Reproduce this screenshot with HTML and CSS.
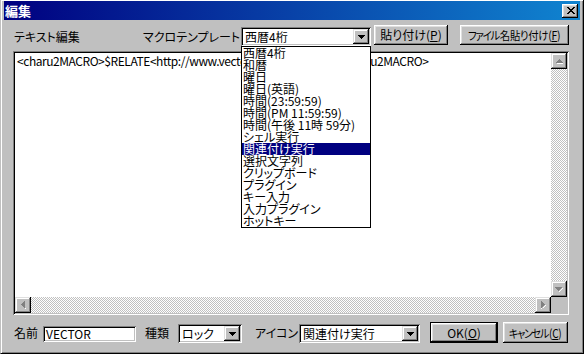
FILE: index.html
```html
<!DOCTYPE html>
<html lang="ja">
<head>
<meta charset="utf-8">
<title>編集</title>
<link rel="stylesheet" href="styles.css">
</head>
<body>
<div class="window">
  <div class="titlebar">
    <span class="title">編集</span>
    <div class="close">
      <svg width="8" height="7" viewBox="0 0 8 7" shape-rendering="crispEdges"><path d="M0 0h2v1h-2zM6 0h2v1h-2zM1 1h2v1h-2zM5 1h2v1h-2zM2 2h4v1h-4zM3 3h2v1h-2zM2 4h4v1h-4zM1 5h2v1h-2zM5 5h2v1h-2zM0 6h2v1h-2zM6 6h2v1h-2z" fill="#000"/></svg>
    </div>
  </div>
  <div class="client">
    <div class="toprow">
      <span class="lbl lbl-text">テキスト編集</span>
      <span class="lbl lbl-macro">マクロテンプレート</span>
      <div class="combo combo-macro">
        <span class="combo-text">西暦4桁</span>
        <span class="dropbtn"><svg width="7" height="4" viewBox="0 0 7 4" shape-rendering="crispEdges"><path d="M0 0h7v1h-7zM1 1h5v1h-5zM2 2h3v1h-3zM3 3h1v1h-1z" fill="#000"/></svg></span>
        <ul class="droplist">
          <li>西暦4桁</li>
          <li>和暦</li>
          <li>曜日</li>
          <li>曜日(英語)</li>
          <li>時間(23:59:59)</li>
          <li>時間(PM 11:59:59)</li>
          <li>時間(午後 11時 59分)</li>
          <li>シェル実行</li>
          <li class="sel">関連付け実行</li>
          <li>選択文字列</li>
          <li>クリップボード</li>
          <li>プラグイン</li>
          <li>キー入力</li>
          <li>入力プラグイン</li>
          <li>ホットキー</li>
        </ul>
      </div>
      <div class="btn btn-paste">貼り付け(<u>P</u>)</div>
      <div class="btn btn-fpaste small"><span class="lab"><span class="kana">ファイル</span>名貼り付け(<u>F</u>)</span></div>
    </div>

    <div class="editor">
      <div class="edit-text">&lt;charu2MACRO&gt;$RELATE&lt;http://www.vector.co.jp/&gt;VECTORS&lt;/charu2MACRO&gt;</div>
      <div class="vscroll">
        <span class="sbtn"><svg width="7" height="5" viewBox="0 0 7 5" shape-rendering="crispEdges"><path d="M4 1h1v1h-1zM5 2h1v1h-1zM1 4h7v1h-7z" fill="#fff"/><path d="M3 0h1v1h-1zM2 1h3v1h-3zM1 2h5v1h-5zM0 3h7v1h-7z" fill="#808080"/></svg></span>
        <span class="track"></span>
        <span class="sbtn"><svg width="8" height="5" viewBox="0 0 8 5" shape-rendering="crispEdges"><path d="M7 1h1v1h-1zM6 2h1v1h-1zM5 3h1v1h-1zM4 4h1v1h-1z" fill="#fff"/><path d="M0 0h7v1h-7zM1 1h5v1h-5zM2 2h3v1h-3zM3 3h1v1h-1z" fill="#808080"/></svg></span>
      </div>
      <div class="hscroll">
        <span class="sbtn"><svg width="5" height="8" viewBox="0 0 5 8" shape-rendering="crispEdges"><path d="M1 4h1v1h-1zM2 5h1v1h-1zM3 6h1v1h-1zM4 7h1v1h-1z" fill="#fff"/><path d="M3 0h1v7h-1zM2 1h1v5h-1zM1 2h1v3h-1zM0 3h1v1h-1z" fill="#808080"/></svg></span>
        <span class="track"></span>
        <span class="sbtn"><svg width="5" height="8" viewBox="0 0 5 8" shape-rendering="crispEdges"><path d="M0 7h1v1h-1zM4 4h1v1h-1zM3 5h1v1h-1zM2 6h1v1h-1z" fill="#fff"/><path d="M0 0h1v7h-1zM1 1h1v5h-1zM2 2h1v3h-1zM3 3h1v1h-1z" fill="#808080"/></svg></span>
      </div>
      <div class="corner"></div>
    </div>

    <div class="botrow">
      <span class="lbl lbl-name">名前</span>
      <div class="field">VECTOR</div>
      <span class="lbl lbl-kind">種類</span>
      <div class="combo combo-kind">
        <span class="combo-text">ロック</span>
        <span class="dropbtn"><svg width="7" height="4" viewBox="0 0 7 4" shape-rendering="crispEdges"><path d="M0 0h7v1h-7zM1 1h5v1h-5zM2 2h3v1h-3zM3 3h1v1h-1z" fill="#000"/></svg></span>
      </div>
      <span class="lbl lbl-icon">アイコン</span>
      <div class="combo combo-icon">
        <span class="combo-text">関連付け実行</span>
        <span class="dropbtn"><svg width="7" height="4" viewBox="0 0 7 4" shape-rendering="crispEdges"><path d="M0 0h7v1h-7zM1 1h5v1h-5zM2 2h3v1h-3zM3 3h1v1h-1z" fill="#000"/></svg></span>
      </div>
      <div class="btn btn-ok"><span class="btn-inner">OK(<u>O</u>)</span></div>
      <div class="btn btn-cancel small"><span class="lab lab-c"><span class="kana">キャンセル</span>(<u>C</u>)</span></div>
    </div>
  </div>
</div>
</body>
</html>
```

FILE: styles.css
```css
* { box-sizing: border-box; }
html, body { margin: 0; padding: 0; }
body {
  width: 584px;
  height: 354px;
  overflow: hidden;
  background: #c0c0c0;
  font-family: "Noto Sans CJK JP", sans-serif;
  font-size: 12px;
  font-feature-settings: "palt";
  color: #000;
}

.window {
  width: 584px;
  height: 354px;
  background: #c0c0c0;
  border-left: 1px solid #c0c0c0;
  border-right: 1px solid #000;
  border-bottom: 1px solid #000;
  box-shadow: inset 1px 1px #fff, inset -1px -1px #808080;
  padding: 1px 3px 3px 3px;
  display: flex;
  flex-direction: column;
}

.titlebar {
  height: 19px;
  flex: none;
  background: linear-gradient(to right, #000080, #1084d0);
  display: flex;
  align-items: center;
  justify-content: space-between;
  padding: 0 2px 0 1px;
}
.title {
  color: #fff;
  font-weight: bold;
  font-size: 13px;
  line-height: 19px;
}
.close {
  width: 16px;
  height: 14px;
  background: #c0c0c0;
  box-shadow: inset -1px -1px #000, inset 1px 1px #fff, inset -2px -2px #808080, inset 2px 2px #dfdfdf;
  display: flex;
  align-items: center;
  justify-content: center;
  padding-left: 1px;
}
.close svg { display: block; }

.client {
  flex: 1;
  padding-top: 5px;
}

.toprow, .botrow {
  display: flex;
  align-items: flex-start;
  height: 21px;
  padding-left: 10px;
}

.lbl {
  line-height: 20px;
  margin-top: 2px;
  white-space: nowrap;
  flex: none;
}
.lbl-text { width: 129px; }
.lbl-macro { width: 98px; }

.combo {
  position: relative;
  flex: none;
  height: 19px;
  margin-top: 2px;
  background: #fff;
  box-shadow: inset 1px 1px #808080, inset -1px -1px #fff, inset 2px 2px #000, inset -2px -2px #c0c0c0;
  display: flex;
  padding: 2px;
}
.combo-text {
  flex: 1;
  padding-left: 2px;
  line-height: 15px;
  white-space: nowrap;
  overflow: hidden;
}
.dropbtn {
  width: 16px;
  height: 15px;
  flex: none;
  background: #c0c0c0;
  box-shadow: inset -1px -1px #000, inset 1px 1px #dfdfdf, inset -2px -2px #808080, inset 2px 2px #fff;
  display: flex;
  align-items: center;
  justify-content: center;
  padding-top: 1px;
}
.dropbtn svg { display: block; }
.combo-macro { width: 130px; }

.droplist {
  position: absolute;
  left: 0;
  top: 19px;
  width: 130px;
  margin: 0;
  padding: 0;
  list-style: none;
  background: #fff;
  border: 1px solid #000;
  z-index: 10;
}
.droplist li {
  height: 12px;
  line-height: 12px;
  padding-left: 1px;
  white-space: nowrap;
}
.droplist li.sel {
  background: #000080;
  color: #fff;
}

.btn {
  flex: none;
  height: 20px;
  background: #c0c0c0;
  box-shadow: inset -1px -1px #000, inset 1px 1px #fff, inset -2px -2px #808080, inset 2px 2px #dfdfdf;
  display: flex;
  align-items: center;
  justify-content: center;
  white-space: nowrap;
  line-height: 14px;
  overflow: hidden;
}
.btn u { text-underline-offset: 1px; }
.btn.small { font-size: 11.5px; letter-spacing: -0.3px; }
.kana { letter-spacing: -1.4px; margin-right: 1px; }
.lab {
  display: inline-block;
  flex: none;
  transform: scaleX(0.9);
}
.lab-c { transform: scaleX(0.87); }
.btn-paste { width: 74px; margin-left: 3px; }
.btn-fpaste { width: 109px; margin-left: 12px; }

.editor {
  margin: 5px 0 0 9px;
  width: 556px;
  height: 264px;
  background: #fff;
  box-shadow: inset 1px 1px #808080, inset -1px -1px #fff, inset 2px 2px #000, inset -2px -2px #c0c0c0;
  padding: 2px;
  display: grid;
  grid-template-columns: 1fr 16px;
  grid-template-rows: 1fr 16px;
}
.edit-text {
  padding: 1px 2px 0 2px;
  line-height: 13px;
  letter-spacing: -0.45px;
  white-space: nowrap;
  overflow: hidden;
}
.vscroll {
  display: flex;
  flex-direction: column;
}
.hscroll {
  display: flex;
}
.track {
  flex: 1;
  background-color: #c0c0c0;
  background-image: conic-gradient(#fff 25%, #c0c0c0 0 50%, #fff 0 75%, #c0c0c0 0);
  background-size: 2px 2px;
}
.sbtn {
  width: 16px;
  height: 16px;
  flex: none;
  background: #c0c0c0;
  box-shadow: inset -1px -1px #000, inset 1px 1px #dfdfdf, inset -2px -2px #808080, inset 2px 2px #fff;
  display: flex;
  align-items: center;
  justify-content: center;
}
.sbtn svg { display: block; }
.corner { background: #c0c0c0; }

.botrow { margin-top: 7px; }
.lbl-name { width: 29px; line-height: 21px; margin-top: 0; }
.field {
  flex: none;
  width: 93px;
  height: 16px;
  margin-top: 4px;
  background: #fff;
  box-shadow: inset 1px 1px #808080, inset -1px -1px #fff, inset 2px 2px #000, inset -2px -2px #c0c0c0;
  padding: 2px 3px;
  line-height: 12px;
}
.lbl-kind { width: 33px; margin-left: 9px; line-height: 21px; margin-top: 0; }
.combo-kind { width: 64px; }
.lbl-icon { width: 44px; margin-left: 13px; line-height: 21px; margin-top: 0; }
.combo-icon { width: 121px; }
.btn-ok {
  width: 68px;
  height: 21px;
  margin-left: 10px;
  border: 1px solid #000;
  padding: 0;
  box-shadow: none;
}
.btn-inner {
  width: 100%;
  height: 100%;
  display: flex;
  align-items: center;
  justify-content: center;
  box-shadow: inset -1px -1px #000, inset 1px 1px #fff, inset -2px -2px #808080, inset 2px 2px #dfdfdf;
}
.btn-cancel { width: 65px; height: 21px; margin-left: 5px; }
```
